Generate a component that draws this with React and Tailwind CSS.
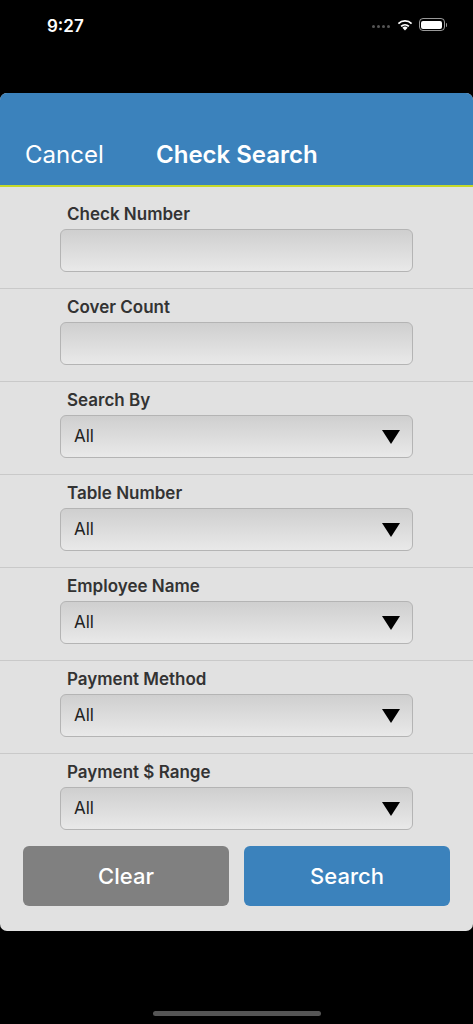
import { useState } from 'react'

const fields = [
  { label: 'Check Number', type: 'text' },
  { label: 'Cover Count', type: 'text' },
  { label: 'Search By', type: 'select' },
  { label: 'Table Number', type: 'select' },
  { label: 'Employee Name', type: 'select' },
  { label: 'Payment Method', type: 'select' },
  { label: 'Payment $ Range', type: 'select' },
]

function StatusBar() {
  return (
    <div className="h-[50px] flex items-start justify-between pl-[47px] pr-[26px] pt-[14px]">
      <span className="text-white text-[17px] font-semibold leading-[24px]">9:27</span>
      <div className="flex items-center gap-[5px] pt-[4px]">
        <div className="flex items-center gap-[2px] mr-[1px] mt-[3px]">
          {[0, 1, 2, 3].map(i => (
            <div key={i} className="w-[3px] h-[3px] rounded-full bg-[#555]" />
          ))}
        </div>
        <svg width="18" height="13" viewBox="0 0 18 13">
          <path d="M9 12.5 L6.4 9.7 A3.8 3.8 0 0 1 11.6 9.7 Z" fill="white" />
          <path d="M4.5 7.8 A6.5 6.5 0 0 1 13.5 7.8 L12.3 9 A4.8 4.8 0 0 0 5.7 9 Z" fill="white" />
          <path d="M1.8 5 A10.3 10.3 0 0 1 16.2 5 L15 6.2 A8.6 8.6 0 0 0 3 6.2 Z" fill="white" />
        </svg>
        <div className="flex items-center">
          <div className="w-[26px] h-[13px] rounded-[4px] border border-white/60 p-[1.5px]">
            <div className="w-full h-full rounded-[2px] bg-white" />
          </div>
          <div className="w-[1.5px] h-[4px] rounded-r bg-white/60 ml-[1px]" />
        </div>
      </div>
    </div>
  )
}

function Field({ label, type, first, last }) {
  return (
    <div className={`pl-[60px] pr-[60px] ${last ? 'pb-[16px]' : 'pb-[16px] border-b border-[#c9c9c9]'} ${first ? 'pt-[16px]' : 'pt-[7px]'}`}>
      <div className="pl-[7px] text-[17px] font-semibold text-[#333] leading-[22px] mb-[4px]">{label}</div>
      <div className="h-[43px] rounded-[6px] border border-[#b4b4b4] bg-gradient-to-b from-[#cfcfcf] to-[#e9e9e9] flex items-center justify-between pl-[13px] pr-[12px]">
        {type === 'select' && (
          <>
            <span className="text-[17px] text-[#222] leading-none">All</span>
            <svg width="18" height="14" viewBox="0 0 18 14">
              <path d="M0 0 H18 L9 14 Z" fill="black" />
            </svg>
          </>
        )}
      </div>
    </div>
  )
}

export default function App() {
  const [ready] = useState(true)
  return (
    <div className="w-[473px] h-[1024px] bg-black flex flex-col" style={{ fontFamily: 'Inter, "Liberation Sans", sans-serif' }}>
      <StatusBar />
      <div className="mt-[43px] rounded-[7px] overflow-hidden bg-[#e1e1e1]">
        <div className="h-[94px] bg-[#3b82bc] border-b-[2px] border-[#c5d92a] flex items-end pb-[15px] pl-[25px]">
          <span className="text-white text-[24px] leading-[30px] w-[131px]">Cancel</span>
          <span className="text-white text-[24px] leading-[30px] font-semibold">Check Search</span>
        </div>
        {fields.map((f, i) => (
          <Field key={f.label} {...f} first={i === 0} last={i === fields.length - 1} />
        ))}
        <div className="flex gap-[15px] px-[23px] pb-[25px]">
          <button className="flex-1 h-[60px] rounded-[6px] bg-[#808080] text-white text-[22px] font-medium">Clear</button>
          <button className="flex-1 h-[60px] rounded-[6px] bg-[#3b82bc] text-white text-[22px] font-medium">{ready ? 'Search' : ''}</button>
        </div>
      </div>
      <div className="flex-1 flex items-end justify-center pb-[8px]">
        <div className="w-[168px] h-[5px] rounded-full bg-[#555]" />
      </div>
    </div>
  )
}
